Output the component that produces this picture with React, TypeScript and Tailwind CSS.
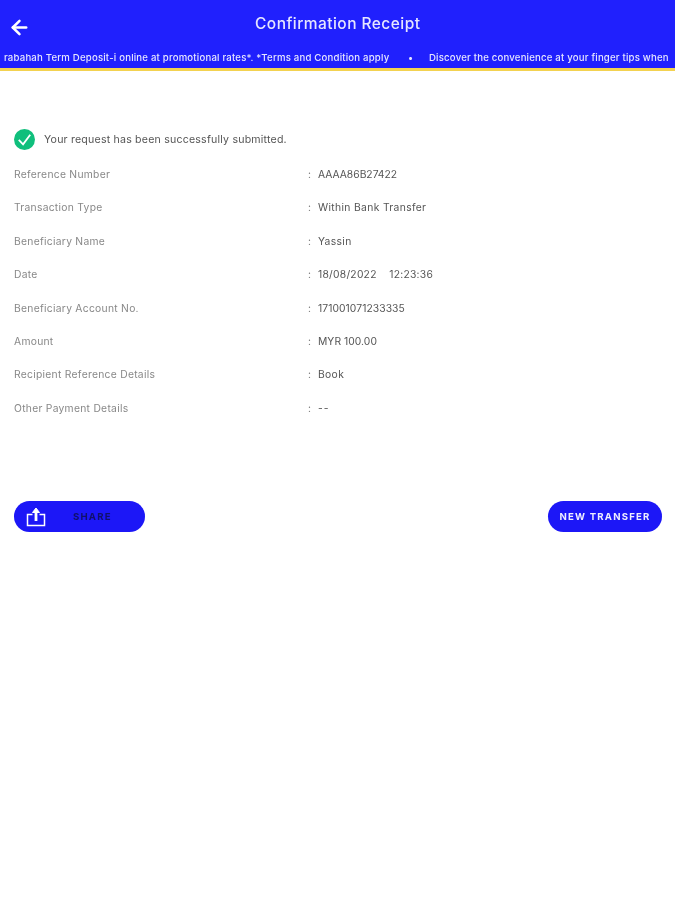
import { ArrowLeft } from "lucide-react";

const rows = [
  { label: "Reference Number", value: "AAAA86B27422", valueClass: "tracking-[0px]" },
  { label: "Transaction Type", value: "Within Bank Transfer", valueClass: "tracking-[0.35px]" },
  { label: "Beneficiary Name", value: "Yassin", valueClass: "tracking-[0.35px]" },
  { label: "Date", value: "18/08/2022\u00a0\u00a0\u00a0\u00a012:23:36", valueClass: "tracking-[0.25px]" },
  { label: "Beneficiary Account No.", value: "171001071233335", valueClass: "tracking-[0.08px]" },
  { label: "Amount", value: "MYR 100.00", valueClass: "tracking-[0.05px]" },
  { label: "Recipient Reference Details", value: "Book", valueClass: "tracking-[0.35px]" },
  { label: "Other Payment Details", value: "--", valueClass: "tracking-[1px]" },
];

function ShareIcon() {
  return (
    <svg width="20" height="20" viewBox="0 0 20 20" fill="none" stroke="white" strokeWidth="1.5">
      <path d="M6.5 7.5H1.5V18.5H18.5V7.5H13.5" />
      <path d="M10 14V3" strokeWidth="2.8" />
      <path d="M6.5 5.5L10 1L13.5 5.5Z" fill="white" strokeWidth="1" />
    </svg>
  );
}

function CheckBadge() {
  return (
    <svg width="21" height="21" viewBox="0 0 22 22" fill="none">
      <circle cx="11" cy="11" r="11" fill="#10bf7c" />
      <path d="M5 11.5L9.5 16L17 6" stroke="white" strokeWidth="1.9" />
    </svg>
  );
}

export default function App() {
  return (
    <div className="min-h-[900px] bg-white font-['Inter',sans-serif] blur-[0.5px]">
      <header className="h-[71px] border-b-[3px] border-[#f3d250] bg-[#2020fd] text-[#e6e6ff]">
        <div className="flex h-[47px] items-center pl-[8px]">
          <ArrowLeft size={23} strokeWidth={2.6} className="mt-[7px] text-white" />
          <h1 className="ml-[224px] text-[15.5px] font-medium tracking-[0.45px]">Confirmation Receipt</h1>
        </div>
        <div className="flex h-[21px] items-center overflow-hidden whitespace-nowrap pl-[4px] pt-[1px] text-[9.6px] font-medium tracking-[0.2px]">
          <span className="w-[388px] shrink-0">rabahah Term Deposit-i online at promotional rates*. *Terms and Condition apply</span>
          <span className="w-[37px] shrink-0 pl-[16px]">•</span>
          <span className="shrink-0">Discover the convenience at your finger tips when</span>
        </div>
      </header>

      <main className="pl-[14px] pr-[13px] pt-[58px]">
        <div className="flex h-[21px] items-center gap-[9px]">
          <CheckBadge />
          <p className="text-[10.6px] tracking-[0.2px] text-[#555]">Your request has been successfully submitted.</p>
        </div>

        <dl className="mt-[8px]">
          {rows.map((row) => (
            <div key={row.label} className="flex h-[33.4px] items-center text-[10.3px]">
              <dt className="w-[294px] tracking-[0.28px] text-[#888]">{row.label}</dt>
              <dd className="w-[10px] text-[#777]">:</dd>
              <dd className={`text-[#555] ${row.valueClass}`}>{row.value}</dd>
            </div>
          ))}
        </dl>

        <div className="mt-[76px] flex items-center justify-between">
          <button className="flex h-[31px] w-[131px] items-center rounded-full bg-[#1c17f7] pl-[12px]">
            <ShareIcon />
            <span className="ml-[27px] pt-[1px] text-[9.6px] font-bold tracking-[1.2px] text-[#10106a]">SHARE</span>
          </button>
          <button className="h-[31px] w-[114px] rounded-full bg-[#1c17f7] pt-[1px] text-[9.6px] font-bold tracking-[1.2px] text-[#eeeeff]">
            NEW TRANSFER
          </button>
        </div>
      </main>
    </div>
  );
}
